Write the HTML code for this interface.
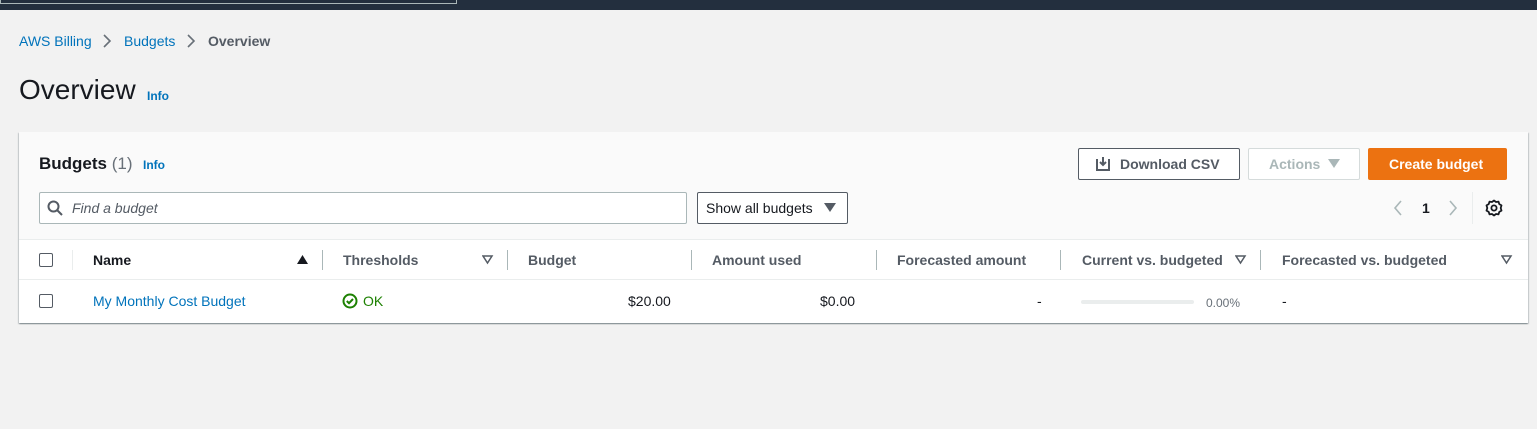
<!DOCTYPE html>
<html><head><style>
*{box-sizing:border-box;margin:0;padding:0}
body{width:1537px;height:429px;background:#f2f2f2;font-family:"Liberation Sans",Arial,sans-serif;position:relative;overflow:hidden;color:#16191f}
.a{position:absolute;white-space:nowrap}
.lnk{color:#0073bb}
.b{font-weight:bold}
.th{font-weight:bold;font-size:14px;color:#545b64;top:252px}
.sep{position:absolute;width:1px;height:20px;background:#aab7b8;top:250px}
.cb{position:absolute;width:14px;height:14px;border:1px solid #545b64;border-radius:2px;background:#fff}
</style></head><body>
<div class="a" style="left:0;top:0;width:1537px;height:10px;background:#232f3e"></div>
<div class="a" style="left:0;top:0;width:457px;height:4px;border:1px solid #aab7b8;border-top:none"></div>
<div class="a lnk" style="left:19px;top:33px;font-size:14px">AWS Billing</div>
<svg class="a" style="left:102px;top:34px" width="10" height="14"><path d="M2 1l6 6-6 6" stroke="#687078" stroke-width="1.6" fill="none"/></svg>
<div class="a lnk" style="left:124px;top:33px;font-size:14px">Budgets</div>
<svg class="a" style="left:186px;top:34px" width="10" height="14"><path d="M2 1l6 6-6 6" stroke="#687078" stroke-width="1.6" fill="none"/></svg>
<div class="a b" style="left:208px;top:33px;font-size:14px;color:#545b64">Overview</div>
<div class="a" style="left:19px;top:74px;font-size:28px;color:#16191f">Overview</div>
<div class="a lnk b" style="left:147px;top:89px;font-size:12px">Info</div>

<div class="a" style="left:19px;top:132px;width:1509px;height:191px;background:#fff;box-shadow:0 1px 1px rgba(0,28,36,.3),1px 1px 1px rgba(0,28,36,.15),-1px 1px 1px rgba(0,28,36,.15)"></div>
<div class="a" style="left:19px;top:132px;width:1509px;height:108px;background:#fafafa;border-bottom:1px solid #eaeded"></div>
<div class="a b" style="left:39px;top:154px;font-size:17px">Budgets <span style="font-weight:normal;color:#687078">(1)</span></div>
<div class="a lnk b" style="left:143px;top:158px;font-size:12px">Info</div>

<div class="a" style="left:1078px;top:148px;width:162px;height:32px;border:1px solid #545b64;border-radius:2px;background:#fff"></div>
<svg class="a" style="left:1096px;top:156px" width="14" height="15"><path d="M1 3v11h12V3M7 1v8M4 6l3 3 3-3" stroke="#545b64" stroke-width="2" fill="none"/></svg>
<div class="a b" style="left:1120px;top:156px;font-size:14px;color:#545b64">Download CSV</div>
<div class="a" style="left:1248px;top:148px;width:112px;height:32px;border:1px solid #d5dbdb;border-radius:2px;background:#fff"></div>
<div class="a b" style="left:1269px;top:156px;font-size:14px;color:#aab7b8">Actions</div>
<svg class="a" style="left:1328px;top:159px" width="12" height="10"><path d="M0 0h12L6 9z" fill="#aab7b8"/></svg>
<div class="a" style="left:1368px;top:148px;width:139px;height:32px;background:#ec7211;border-radius:2px"></div>
<div class="a b" style="left:1389px;top:156px;font-size:14px;color:#fff">Create budget</div>

<div class="a" style="left:39px;top:192px;width:648px;height:32px;border:1px solid #aab7b8;border-radius:2px;background:#fff"></div>
<svg class="a" style="left:47px;top:200px" width="16" height="16"><circle cx="6.5" cy="6.5" r="5" stroke="#545b64" stroke-width="2" fill="none"/><path d="M10 10l5 5" stroke="#545b64" stroke-width="2"/></svg>
<div class="a" style="left:72px;top:200px;font-size:14px;font-style:italic;color:#545b64">Find a budget</div>
<div class="a" style="left:697px;top:192px;width:151px;height:32px;border:1px solid #545b64;border-radius:2px;background:#fff"></div>
<div class="a" style="left:706px;top:200px;font-size:14px">Show all budgets</div>
<svg class="a" style="left:824px;top:203px" width="12" height="10"><path d="M0 0h12L6 9z" fill="#545b64"/></svg>

<svg class="a" style="left:1393px;top:200px" width="10" height="16"><path d="M8 1L2 8l6 7" stroke="#aab7b8" stroke-width="1.6" fill="none"/></svg>
<div class="a b" style="left:1422px;top:200px;font-size:14px">1</div>
<svg class="a" style="left:1448px;top:200px" width="10" height="16"><path d="M2 1l6 7-6 7" stroke="#aab7b8" stroke-width="1.6" fill="none"/></svg>
<div class="a" style="left:1472px;top:192px;width:1px;height:32px;background:#eaeded"></div>
<svg class="a" style="left:1484px;top:198px" width="20" height="20" viewBox="0 0 20 20"><path d="M10 2.5l2 1.5 2.5-.3.8 2.4 2.2 1.3-.8 2.6.8 2.6-2.2 1.3-.8 2.4-2.5-.3-2 1.5-2-1.5-2.5.3-.8-2.4-2.2-1.3.8-2.6-.8-2.6 2.2-1.3.8-2.4 2.5.3z" stroke="#16191f" stroke-width="1.8" fill="none" stroke-linejoin="round"/><circle cx="10" cy="10" r="2.6" stroke="#16191f" stroke-width="1.8" fill="none"/></svg>

<div class="cb" style="left:39px;top:253px"></div>
<div class="a" style="left:72px;top:250px;width:1px;height:20px;background:#eaeded"></div>
<div class="a b" style="left:93px;top:252px;font-size:14px">Name</div>
<svg class="a" style="left:297px;top:255px" width="12" height="10"><path d="M0 9h11L5.5 0z" fill="#16191f"/></svg>
<div class="sep" style="left:322px"></div>
<div class="a th" style="left:343px">Thresholds</div>
<svg class="a" style="left:482px;top:255px" width="12" height="10"><path d="M1 1h9L5.5 8z" stroke="#545b64" stroke-width="1.5" fill="none"/></svg>
<div class="sep" style="left:507px"></div>
<div class="a th" style="left:528px">Budget</div>
<div class="sep" style="left:691px"></div>
<div class="a th" style="left:712px">Amount used</div>
<div class="sep" style="left:876px"></div>
<div class="a th" style="left:897px">Forecasted amount</div>
<div class="sep" style="left:1060px"></div>
<div class="a th" style="left:1082px">Current vs. budgeted</div>
<svg class="a" style="left:1235px;top:255px" width="12" height="10"><path d="M1 1h9L5.5 8z" stroke="#545b64" stroke-width="1.5" fill="none"/></svg>
<div class="sep" style="left:1260px"></div>
<div class="a th" style="left:1282px">Forecasted vs. budgeted</div>
<svg class="a" style="left:1501px;top:255px" width="12" height="10"><path d="M1 1h9L5.5 8z" stroke="#545b64" stroke-width="1.5" fill="none"/></svg>
<div class="a" style="left:19px;top:279px;width:1509px;height:1px;background:#eaeded"></div>

<div class="cb" style="left:39px;top:294px"></div>
<div class="a lnk" style="left:93px;top:293px;font-size:14px">My Monthly Cost Budget</div>
<svg class="a" style="left:342px;top:293px" width="16" height="16"><circle cx="8" cy="8" r="6.5" stroke="#1d8102" stroke-width="2" fill="none"/><path d="M4.8 8l2.2 2.2 4-4.2" stroke="#1d8102" stroke-width="2" fill="none"/></svg>
<div class="a" style="left:363px;top:293px;font-size:14px;color:#1d8102">OK</div>
<div class="a" style="left:628px;top:293px;font-size:14px">$20.00</div>
<div class="a" style="left:820px;top:293px;font-size:14px">$0.00</div>
<div class="a" style="left:1037px;top:293px;font-size:14px">-</div>
<div class="a" style="left:1081px;top:300px;width:113px;height:4px;background:#eaeded;border-radius:2px"></div>
<div class="a" style="left:1206px;top:296px;font-size:12px;color:#687078">0.00%</div>
<div class="a" style="left:1282px;top:293px;font-size:14px">-</div>
</body></html>
